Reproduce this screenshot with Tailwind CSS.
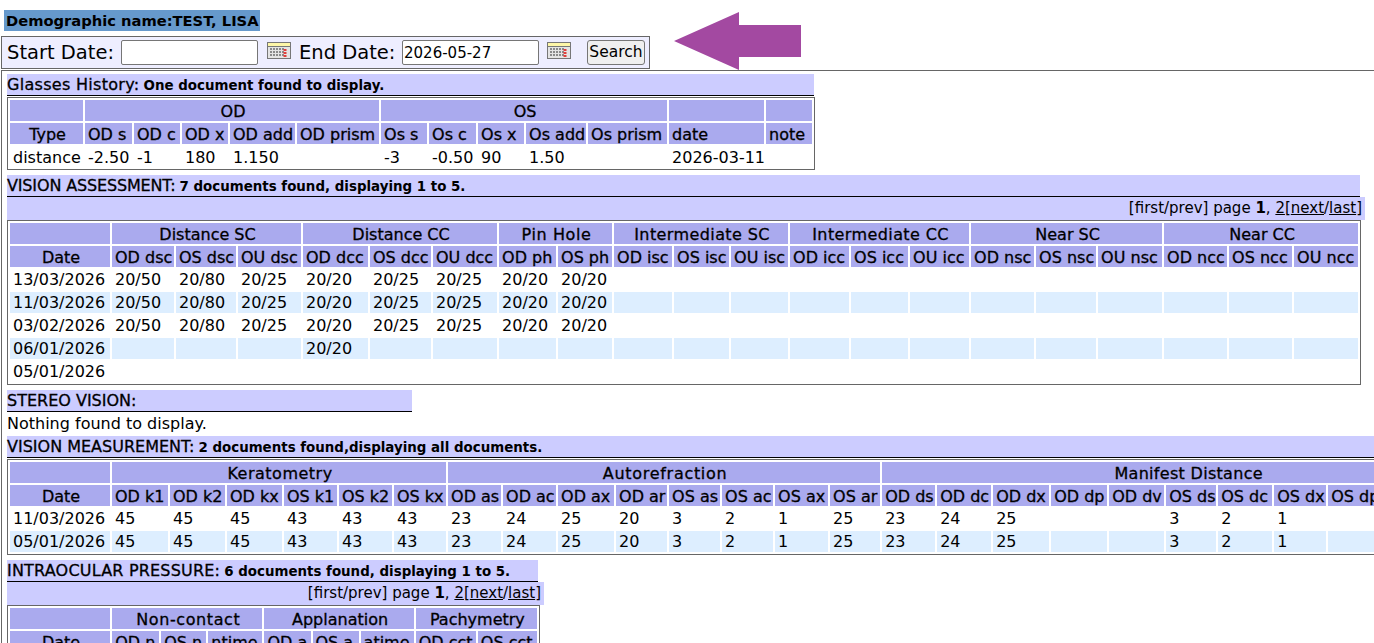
<!DOCTYPE html>
<html lang="en">
<head>
  <meta charset="UTF-8" />
  <title>Eyeform</title>
  <script src="https://cdn.jsdelivr.net/npm/@tailwindcss/browser@4"></script>
</head>
<body class="h-screen overflow-hidden bg-white text-black font-['DejaVu_Sans','Liberation_Sans',sans-serif] text-[16px] leading-[19px]">
  <!-- arrow over the search bar -->
  <svg class="absolute left-[674px] top-[12px] z-10" width="128" height="59" viewBox="0 0 128 59">
    <polygon points="0,29 65,0 65,13 127,13 127,45 65,45 65,58" fill="#a349a1" />
  </svg>

  <div class="flex pt-[10px] pl-[4px]">
    <span class="h-[21px] whitespace-nowrap bg-[#6699cc] pl-[2px] pr-px text-[14.7px] font-bold leading-[21px]">Demographic name:TEST, LISA</span>
  </div>

  <form class="ml-px mt-[5px] flex h-[33px] w-[649px] items-center whitespace-nowrap border border-[#666] bg-[#eeeeff] pl-[5px] text-[19.5px]">
    <label class="w-[114px]">Start Date:</label>
    <input class="h-[25px] w-[137px] rounded-[2px] border border-[#767676] bg-white px-px text-[15px]" type="text" />
    <svg class="ml-[9px] mb-[5px] shrink-0" width="24" height="17" viewBox="0 0 24 17">
      <rect x="0.5" y="0.5" width="23" height="16" fill="#e4e4e4" stroke="#777" />
      <rect x="1" y="1" width="22" height="3" fill="#fdf6a8" />
      <rect x="1" y="4" width="22" height="1" fill="#777" />
      <path d="M3 7h15M3 10h15M3 13h15" stroke="#8a8a8a" stroke-width="2" stroke-dasharray="2 1" />
      <path d="M18 7v8" stroke="#e0403c" stroke-width="3" stroke-dasharray="2 1" />
    </svg>
    <label class="ml-[8px] w-[103px]">End Date:</label>
    <input class="h-[25px] w-[137px] rounded-[2px] border border-[#767676] bg-white px-px text-[15px]" type="text" value="2026-05-27" />
    <svg class="ml-[8px] mb-[5px] shrink-0" width="24" height="17" viewBox="0 0 24 17">
      <rect x="0.5" y="0.5" width="23" height="16" fill="#e4e4e4" stroke="#777" />
      <rect x="1" y="1" width="22" height="3" fill="#fdf6a8" />
      <rect x="1" y="4" width="22" height="1" fill="#777" />
      <path d="M3 7h15M3 10h15M3 13h15" stroke="#8a8a8a" stroke-width="2" stroke-dasharray="2 1" />
      <path d="M18 7v8" stroke="#e0403c" stroke-width="3" stroke-dasharray="2 1" />
    </svg>
    <button class="ml-[16px] h-[25px] w-[58px] rounded-[3px] border border-[#767676] bg-[#efefef] text-[15.5px]" type="button">Search</button>
  </form>

  <div class="ml-px mt-px border-l border-t border-[#666] pt-[3px] pl-[5px]">

    <!-- glasses history -->
    <div class="h-[22px] w-[807px] whitespace-nowrap border-b border-black bg-[#ccccff] leading-[21px]"><span class="tracking-[0.3px] [-webkit-text-stroke:0.3px_black]">Glasses History:</span><span class="ml-[4px] text-[13.4px] font-bold">One document found to display.</span></div>
    <table class="mt-px w-[808px] table-fixed border-separate border-spacing-[2px] whitespace-nowrap border border-[#666] [&_td]:h-[21px] [&_td]:pl-[3px] [&_td]:pr-px [&_td]:pt-px [&_th]:h-[21px] [&_th]:bg-[#aaaaee] [&_th]:pl-[3px] [&_th]:pr-px [&_th]:pt-px [&_th]:font-normal [&_th]:[-webkit-text-stroke:0.3px_black]">
      <colgroup>
        <col class="w-[73px]" /><col class="w-[47px]" /><col class="w-[46px]" /><col class="w-[46px]" /><col class="w-[65px]" /><col class="w-[82px]" /><col class="w-[46px]" /><col class="w-[47px]" /><col class="w-[46px]" /><col class="w-[60px]" /><col class="w-[79px]" /><col class="w-[95px]" /><col class="w-[46px]" />
      </colgroup>
      <thead>
        <tr><th></th><th colspan="5">OD</th><th colspan="5">OS</th><th></th><th></th></tr>
        <tr class="[&>th]:text-left [&>th:first-child]:text-center">
          <th>Type</th><th>OD s</th><th>OD c</th><th>OD x</th><th>OD add</th><th>OD prism</th><th>Os s</th><th>Os c</th><th>Os x</th><th>Os add</th><th>Os prism</th><th>date</th><th>note</th>
        </tr>
      </thead>
      <tbody>
        <tr><td>distance</td><td>-2.50</td><td>-1</td><td>180</td><td>1.150</td><td></td><td>-3</td><td>-0.50</td><td>90</td><td>1.50</td><td></td><td>2026-03-11</td><td></td></tr>
      </tbody>
    </table>

    <!-- vision assessment -->
    <div class="mt-[5px] h-[22px] w-[1353px] whitespace-nowrap border-b border-black bg-[#ccccff] leading-[21px]"><span class="tracking-[-0.15px] [-webkit-text-stroke:0.3px_black]">VISION ASSESSMENT:</span><span class="ml-[4px] text-[13.4px] font-bold">7 documents found, displaying 1 to 5.</span></div>
    <div class="h-[23px] w-[1358px] whitespace-nowrap bg-[#ccccff] pr-[3px] text-right text-[15px] leading-[22px]">[first/prev] page <b>1</b>, <u>2</u>[<u>next</u>/<u>last</u>]</div>
    <table class="w-[1354px] table-fixed border-separate border-spacing-[2px] whitespace-nowrap border border-[#666] [&_td]:h-[21px] [&_td]:pl-[3px] [&_td]:pr-px [&_th]:h-[21px] [&_th]:bg-[#aaaaee] [&_th]:pl-[3px] [&_th]:pr-px [&_th]:pt-px [&_th]:font-normal [&_th]:[-webkit-text-stroke:0.3px_black]">
      <colgroup>
        <col class="w-[100px]" /><col class="w-[62px]" /><col class="w-[60px]" /><col class="w-[63px]" /><col class="w-[65px]" /><col class="w-[61px]" /><col class="w-[64px]" /><col class="w-[57px]" /><col class="w-[54px]" /><col class="w-[58px]" /><col class="w-[55px]" /><col class="w-[57px]" /><col class="w-[59px]" /><col class="w-[57px]" /><col class="w-[59px]" /><col class="w-[63px]" /><col class="w-[60px]" /><col class="w-[64px]" /><col class="w-[63px]" /><col class="w-[63px]" /><col class="w-[64px]" />
      </colgroup>
      <thead>
        <tr><th></th><th colspan="3">Distance SC</th><th colspan="3">Distance CC</th><th colspan="2" class="tracking-[0.6px]">Pin Hole</th><th colspan="3" class="tracking-[0.4px]">Intermediate SC</th><th colspan="3" class="tracking-[0.4px]">Intermediate CC</th><th colspan="3">Near SC</th><th colspan="3">Near CC</th></tr>
        <tr class="[&>th]:text-left [&>th:first-child]:text-center">
          <th>Date</th><th>OD dsc</th><th>OS dsc</th><th>OU dsc</th><th>OD dcc</th><th>OS dcc</th><th>OU dcc</th><th>OD ph</th><th>OS ph</th><th>OD isc</th><th>OS isc</th><th>OU isc</th><th>OD icc</th><th>OS icc</th><th>OU icc</th><th>OD nsc</th><th>OS nsc</th><th>OU nsc</th><th>OD ncc</th><th>OS ncc</th><th>OU ncc</th>
        </tr>
      </thead>
      <tbody>
        <tr><td>13/03/2026</td><td>20/50</td><td>20/80</td><td>20/25</td><td>20/20</td><td>20/25</td><td>20/25</td><td>20/20</td><td>20/20</td><td></td><td></td><td></td><td></td><td></td><td></td><td></td><td></td><td></td><td></td><td></td><td></td></tr>
        <tr class="bg-[#ddeeff]"><td>11/03/2026</td><td>20/50</td><td>20/80</td><td>20/25</td><td>20/20</td><td>20/25</td><td>20/25</td><td>20/20</td><td>20/20</td><td></td><td></td><td></td><td></td><td></td><td></td><td></td><td></td><td></td><td></td><td></td><td></td></tr>
        <tr><td>03/02/2026</td><td>20/50</td><td>20/80</td><td>20/25</td><td>20/20</td><td>20/25</td><td>20/25</td><td>20/20</td><td>20/20</td><td></td><td></td><td></td><td></td><td></td><td></td><td></td><td></td><td></td><td></td><td></td><td></td></tr>
        <tr class="bg-[#ddeeff]"><td>06/01/2026</td><td></td><td></td><td></td><td>20/20</td><td></td><td></td><td></td><td></td><td></td><td></td><td></td><td></td><td></td><td></td><td></td><td></td><td></td><td></td><td></td><td></td></tr>
        <tr><td>05/01/2026</td><td></td><td></td><td></td><td></td><td></td><td></td><td></td><td></td><td></td><td></td><td></td><td></td><td></td><td></td><td></td><td></td><td></td><td></td><td></td><td></td></tr>
      </tbody>
    </table>

    <!-- stereo vision -->
    <div class="mt-[5px] h-[22px] w-[405px] whitespace-nowrap border-b border-black bg-[#ccccff] leading-[21px] [-webkit-text-stroke:0.3px_black]">STEREO VISION:</div>
    <div class="h-[24px] pt-[2px]">Nothing found to display.</div>

    <!-- vision measurement -->
    <div class="h-[22px] w-[1489px] whitespace-nowrap border-b border-black bg-[#ccccff] leading-[21px]"><span class="[-webkit-text-stroke:0.3px_black]">VISION MEASUREMENT:</span><span class="ml-[4px] text-[13.4px] font-bold">2 documents found,displaying all documents.</span></div>
    <table class="mt-px w-[1489px] table-fixed border-separate border-spacing-[2px] whitespace-nowrap border border-[#666] [&_td]:h-[21px] [&_td]:pl-[3px] [&_td]:pr-px [&_th]:h-[21px] [&_th]:bg-[#aaaaee] [&_th]:pl-[3px] [&_th]:pr-px [&_th]:pt-px [&_th]:font-normal [&_th]:[-webkit-text-stroke:0.3px_black]">
      <colgroup>
        <col class="w-[100px]" /><col class="w-[56px]" /><col class="w-[55px]" /><col class="w-[55px]" /><col class="w-[53px]" /><col class="w-[53px]" /><col class="w-[52px]" /><col class="w-[53px]" /><col class="w-[53px]" /><col class="w-[56px]" /><col class="w-[51px]" /><col class="w-[51px]" /><col class="w-[51px]" /><col class="w-[53px]" /><col class="w-[50px]" /><col class="w-[53px]" /><col class="w-[54px]" /><col class="w-[56px]" /><col class="w-[56px]" /><col class="w-[55px]" /><col class="w-[50px]" /><col class="w-[54px]" /><col class="w-[52px]" /><col class="w-[57px]" /><col class="w-[106px]" />
      </colgroup>
      <thead>
        <tr><th></th><th colspan="6" class="tracking-[0.5px]">Keratometry</th><th colspan="8" class="tracking-[0.7px]">Autorefraction</th><th colspan="10" class="tracking-[0.3px]">Manifest Distance</th></tr>
        <tr class="[&>th]:text-left [&>th:first-child]:text-center">
          <th>Date</th><th>OD k1</th><th>OD k2</th><th>OD kx</th><th>OS k1</th><th>OS k2</th><th>OS kx</th><th>OD as</th><th>OD ac</th><th>OD ax</th><th>OD ar</th><th>OS as</th><th>OS ac</th><th>OS ax</th><th>OS ar</th><th>OD ds</th><th>OD dc</th><th>OD dx</th><th>OD dp</th><th>OD dv</th><th>OS ds</th><th>OS dc</th><th>OS dx</th><th>OS dp</th><th>OS dv</th>
        </tr>
      </thead>
      <tbody>
        <tr><td>11/03/2026</td><td>45</td><td>45</td><td>45</td><td>43</td><td>43</td><td>43</td><td>23</td><td>24</td><td>25</td><td>20</td><td>3</td><td>2</td><td>1</td><td>25</td><td>23</td><td>24</td><td>25</td><td></td><td></td><td>3</td><td>2</td><td>1</td><td></td><td></td></tr>
        <tr class="bg-[#ddeeff]"><td>05/01/2026</td><td>45</td><td>45</td><td>45</td><td>43</td><td>43</td><td>43</td><td>23</td><td>24</td><td>25</td><td>20</td><td>3</td><td>2</td><td>1</td><td>25</td><td>23</td><td>24</td><td>25</td><td></td><td></td><td>3</td><td>2</td><td>1</td><td></td><td></td></tr>
      </tbody>
    </table>

    <!-- intraocular pressure -->
    <div class="mt-[5px] h-[22px] w-[531px] whitespace-nowrap border-b border-black bg-[#ccccff] leading-[21px]"><span class="tracking-[0.2px] [-webkit-text-stroke:0.3px_black]">INTRAOCULAR PRESSURE:</span><span class="ml-[4px] text-[13.4px] font-bold">6 documents found, displaying 1 to 5.</span></div>
    <div class="h-[23px] w-[537px] whitespace-nowrap bg-[#ccccff] pr-[3px] text-right text-[15px] leading-[22px]">[first/prev] page <b>1</b>, <u>2</u>[<u>next</u>/<u>last</u>]</div>
    <table class="w-[533px] table-fixed border-separate border-spacing-[2px] whitespace-nowrap border border-[#666] [&_td]:h-[21px] [&_td]:pl-[3px] [&_td]:pr-px [&_th]:h-[21px] [&_th]:bg-[#aaaaee] [&_th]:pl-[3px] [&_th]:pr-px [&_th]:pt-px [&_th]:font-normal [&_th]:[-webkit-text-stroke:0.3px_black]">
      <colgroup>
        <col class="w-[100px]" /><col class="w-[47px]" /><col class="w-[45px]" /><col class="w-[54px]" /><col class="w-[46px]" /><col class="w-[46px]" /><col class="w-[53px]" /><col class="w-[60px]" /><col class="w-[59px]" />
      </colgroup>
      <thead>
        <tr><th></th><th colspan="3" class="tracking-[0.6px]">Non-contact</th><th colspan="3">Applanation</th><th colspan="2">Pachymetry</th></tr>
        <tr class="[&>th]:text-left [&>th:first-child]:text-center">
          <th>Date</th><th>OD n</th><th>OS n</th><th>ntime</th><th>OD a</th><th>OS a</th><th>atime</th><th>OD cct</th><th>OS cct</th>
        </tr>
      </thead>
    </table>
  </div>
</body>
</html>
